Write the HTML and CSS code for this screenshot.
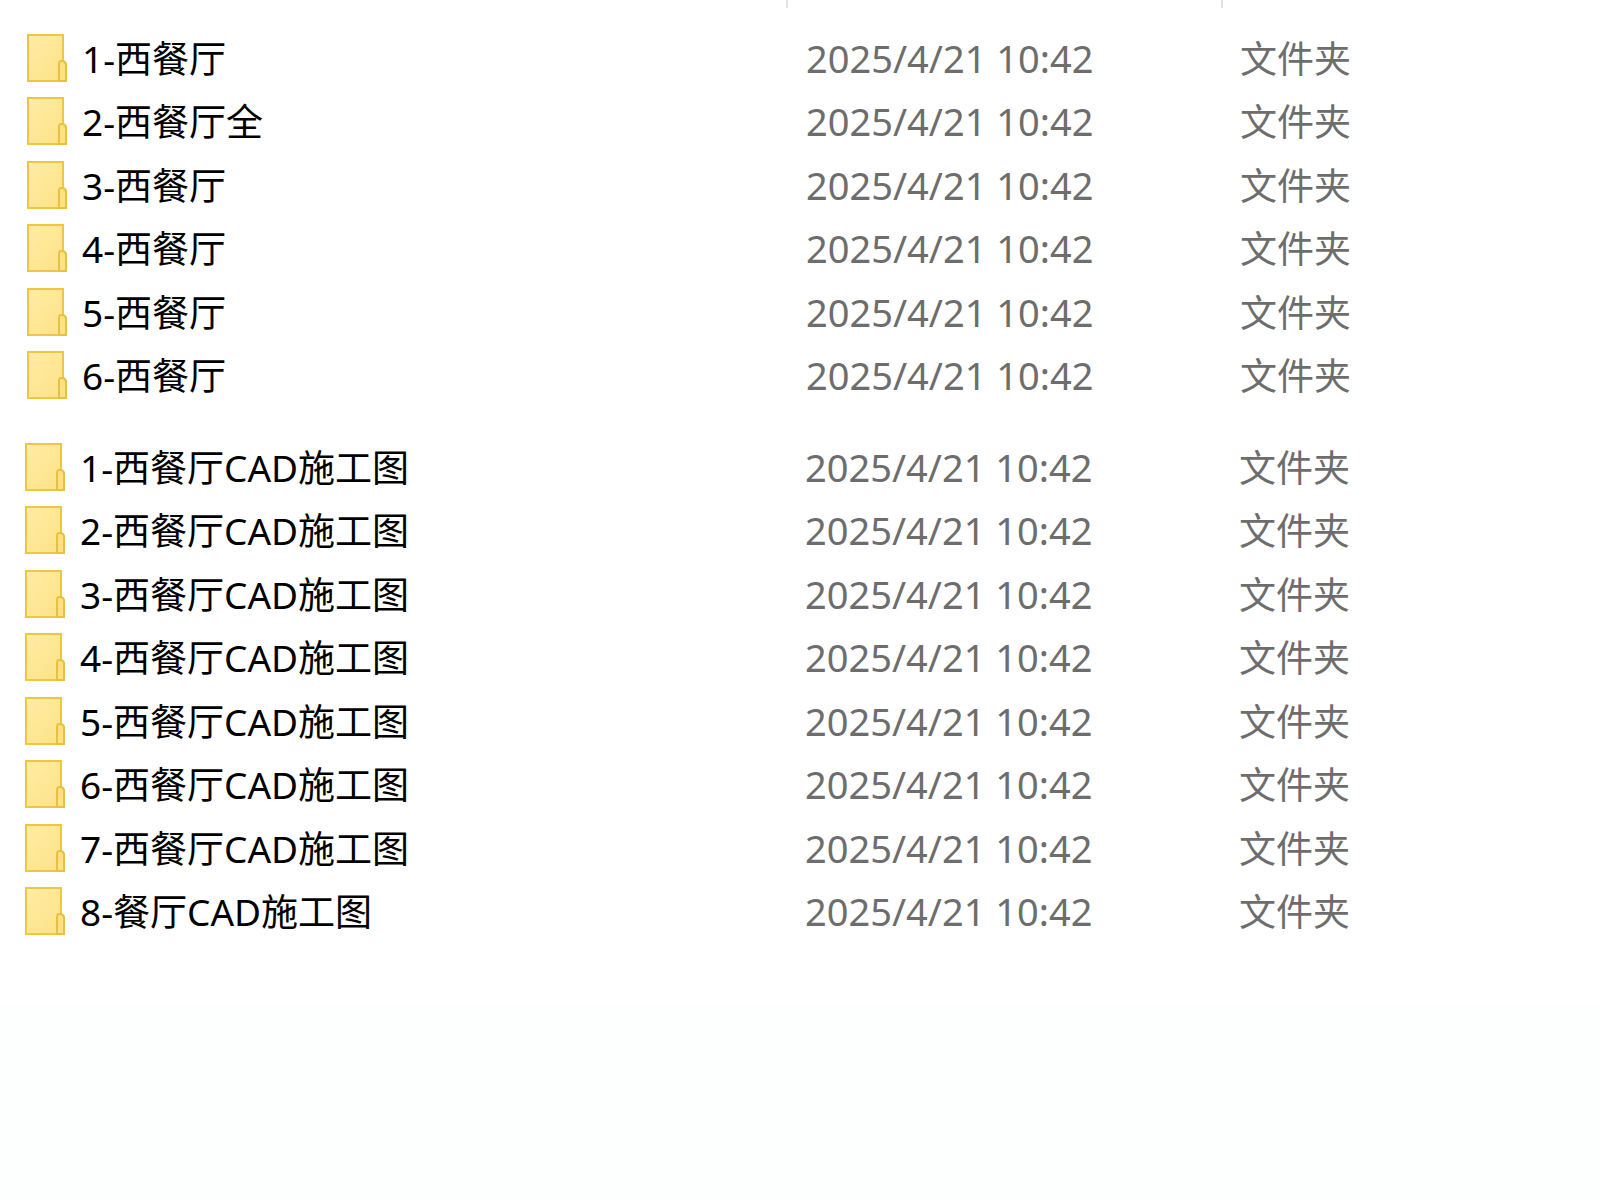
FILE: index.html
```
<!doctype html>
<html lang="zh-CN">
<head>
    <meta charset="UTF-8">
    <meta name="viewport" content="width=device-width, initial-scale=1.0">
    <title>西餐厅</title>
    <link rel="stylesheet" href="styles.css">
</head>
<body>

<!--文件夹图标-->
<svg class="sprite" aria-hidden="true">
    <defs>
        <linearGradient id="paper" x1="0" y1="0" x2="1" y2="1">
            <stop offset="0" stop-color="#ffeca6"/>
            <stop offset="1" stop-color="#fde184"/>
        </linearGradient>
    </defs>
    <symbol id="folder" viewBox="0 0 40 48">
        <path d="M1 1H36V27L39 30V47H1Z" fill="url(#paper)" stroke="#edc740" stroke-width="2"/>
        <path d="M32 47V30Q32 27 34 27H36Q39 28 39 31V47Z" fill="#fde184" stroke="#e8c140" stroke-width="2"/>
    </symbol>
</svg>

<div class="header">
    <div class="header-name"></div>
    <div class="header-date"></div>
</div>

<table class="list">
    <tr><td class="name"><div class="file"><svg class="icon"><use href="#folder"/></svg><span>1-西餐厅</span></div></td><td class="date">2025/4/21 10:42</td><td class="type">文件夹</td></tr>
    <tr><td class="name"><div class="file"><svg class="icon"><use href="#folder"/></svg><span>2-西餐厅全</span></div></td><td class="date">2025/4/21 10:42</td><td class="type">文件夹</td></tr>
    <tr><td class="name"><div class="file"><svg class="icon"><use href="#folder"/></svg><span>3-西餐厅</span></div></td><td class="date">2025/4/21 10:42</td><td class="type">文件夹</td></tr>
    <tr><td class="name"><div class="file"><svg class="icon"><use href="#folder"/></svg><span>4-西餐厅</span></div></td><td class="date">2025/4/21 10:42</td><td class="type">文件夹</td></tr>
    <tr><td class="name"><div class="file"><svg class="icon"><use href="#folder"/></svg><span>5-西餐厅</span></div></td><td class="date">2025/4/21 10:42</td><td class="type">文件夹</td></tr>
    <tr><td class="name"><div class="file"><svg class="icon"><use href="#folder"/></svg><span>6-西餐厅</span></div></td><td class="date">2025/4/21 10:42</td><td class="type">文件夹</td></tr>
</table>

<!--CAD施工图-->
<div class="cad">
    <table class="list">
        <tr><td class="name"><div class="file"><svg class="icon"><use href="#folder"/></svg><span>1-西餐厅CAD施工图</span></div></td><td class="date">2025/4/21 10:42</td><td class="type">文件夹</td></tr>
        <tr><td class="name"><div class="file"><svg class="icon"><use href="#folder"/></svg><span>2-西餐厅CAD施工图</span></div></td><td class="date">2025/4/21 10:42</td><td class="type">文件夹</td></tr>
        <tr><td class="name"><div class="file"><svg class="icon"><use href="#folder"/></svg><span>3-西餐厅CAD施工图</span></div></td><td class="date">2025/4/21 10:42</td><td class="type">文件夹</td></tr>
        <tr><td class="name"><div class="file"><svg class="icon"><use href="#folder"/></svg><span>4-西餐厅CAD施工图</span></div></td><td class="date">2025/4/21 10:42</td><td class="type">文件夹</td></tr>
        <tr><td class="name"><div class="file"><svg class="icon"><use href="#folder"/></svg><span>5-西餐厅CAD施工图</span></div></td><td class="date">2025/4/21 10:42</td><td class="type">文件夹</td></tr>
        <tr><td class="name"><div class="file"><svg class="icon"><use href="#folder"/></svg><span>6-西餐厅CAD施工图</span></div></td><td class="date">2025/4/21 10:42</td><td class="type">文件夹</td></tr>
        <tr><td class="name"><div class="file"><svg class="icon"><use href="#folder"/></svg><span>7-西餐厅CAD施工图</span></div></td><td class="date">2025/4/21 10:42</td><td class="type">文件夹</td></tr>
        <tr><td class="name"><div class="file"><svg class="icon"><use href="#folder"/></svg><span>8-餐厅CAD施工图</span></div></td><td class="date">2025/4/21 10:42</td><td class="type">文件夹</td></tr>
    </table>
</div>

</body>
</html>
```
FILE: styles.css
```
* {
    box-sizing: border-box;
}
html {
    background: #fdfffe;
}
body {
    margin: 0;
    font-family: "Noto Sans", "Noto Sans CJK SC", sans-serif;
    color: #000;
}
.sprite {
    position: absolute;
    width: 0;
    height: 0;
}
.header {
    display: flex;
    height: 26px;
    background: #fff;
}
.header div {
    height: 8px;
    border-right: 2px solid #e2e2e2;
}
.header-name {
    width: 788px;
}
.header-date {
    width: 435px;
}
.list {
    width: 100%;
    table-layout: fixed;
    border-collapse: collapse;
    background: #fff;
}
.list tr {
    height: 63px;
}
.list tr:nth-child(even) {
    height: 64px;
}
.list td {
    padding: 0;
    line-height: 56px;
    white-space: nowrap;
}
.list .name {
    width: 806px;
    padding-left: 27px;
    font-size: 37px;
}
.file {
    display: flex;
    align-items: center;
    gap: 15px;
}
.file span {
    padding-top: 2px;
}
.icon {
    width: 40px;
    height: 48px;
}
.list .date {
    width: 434px;
    font-size: 38px;
    color: #6d6d6d;
}
.list .type {
    padding-top: 2px;
    font-size: 37px;
    color: #6d6d6d;
}
.cad {
    padding: 28px 0 62px;
    background: #fff;
}
.cad .list .name {
    width: 805px;
    padding-left: 25px;
}
```
